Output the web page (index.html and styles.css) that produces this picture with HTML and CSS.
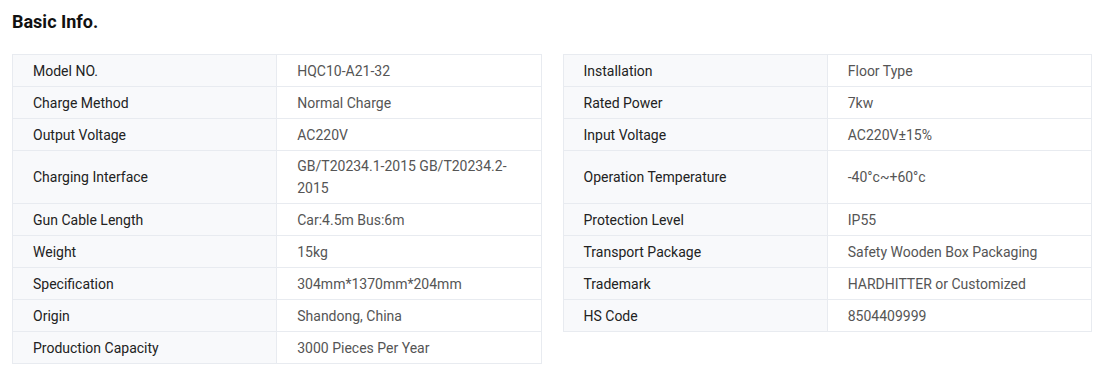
FILE: index.html
```html
<!DOCTYPE html>
<html lang="en">
<head>
<meta charset="utf-8">
<title>Basic Info.</title>
<link rel="stylesheet" href="styles.css">
</head>
<body>
<section class="basic-info">
  <h2 class="title">Basic Info.</h2>
  <div class="tables">
    <table class="spec">
      <tbody>
        <tr><th>Model NO.</th><td>HQC10-A21-32</td></tr>
        <tr><th>Charge Method</th><td>Normal Charge</td></tr>
        <tr><th>Output Voltage</th><td>AC220V</td></tr>
        <tr class="tall"><th>Charging Interface</th><td>GB/T20234.1-2015 GB/T20234.2-2015</td></tr>
        <tr><th>Gun Cable Length</th><td>Car:4.5m Bus:6m</td></tr>
        <tr><th>Weight</th><td>15kg</td></tr>
        <tr><th>Specification</th><td>304mm*1370mm*204mm</td></tr>
        <tr><th>Origin</th><td>Shandong, China</td></tr>
        <tr><th>Production Capacity</th><td>3000 Pieces Per Year</td></tr>
      </tbody>
    </table>
    <table class="spec">
      <tbody>
        <tr><th>Installation</th><td>Floor Type</td></tr>
        <tr><th>Rated Power</th><td>7kw</td></tr>
        <tr><th>Input Voltage</th><td>AC220V±15%</td></tr>
        <tr class="tall"><th>Operation Temperature</th><td>-40°c~+60°c</td></tr>
        <tr><th>Protection Level</th><td>IP55</td></tr>
        <tr><th>Transport Package</th><td>Safety Wooden Box Packaging</td></tr>
        <tr><th>Trademark</th><td>HARDHITTER or Customized</td></tr>
        <tr><th>HS Code</th><td>8504409999</td></tr>
      </tbody>
    </table>
  </div>
</section>
</body>
</html>
```
FILE: styles.css
```css
* { box-sizing: border-box; }
html, body { margin: 0; padding: 0; background: #fff; }
body {
  font-family: Roboto, "Liberation Sans", Arial, sans-serif;
  color: #222;
}
.basic-info { padding: 0 11px 0 12px; }
.title {
  margin: 0;
  padding-top: 11px;
  height: 54px;
  font-size: 18px;
  line-height: 22px;
  font-weight: 700;
  color: #111;
}
.tables {
  display: flex;
  align-items: flex-start;
  gap: 21px;
}
.spec {
  flex: 1 1 0;
  width: 0;
  border-collapse: collapse;
  table-layout: fixed;
  font-size: 14px;
  line-height: 22px;
}
.spec th, .spec td {
  border: 1px solid #e8ebf0;
  padding: 5px 20px 4px;
  text-align: left;
  vertical-align: middle;
  font-weight: 400;
}
.spec th {
  width: 50%;
  background: #f8f9fb;
  color: #222;
}
.spec td {
  color: #555;
  background: #fff;
}
.spec .tall th, .spec .tall td { height: 53px; padding-top: 4px; }
```
